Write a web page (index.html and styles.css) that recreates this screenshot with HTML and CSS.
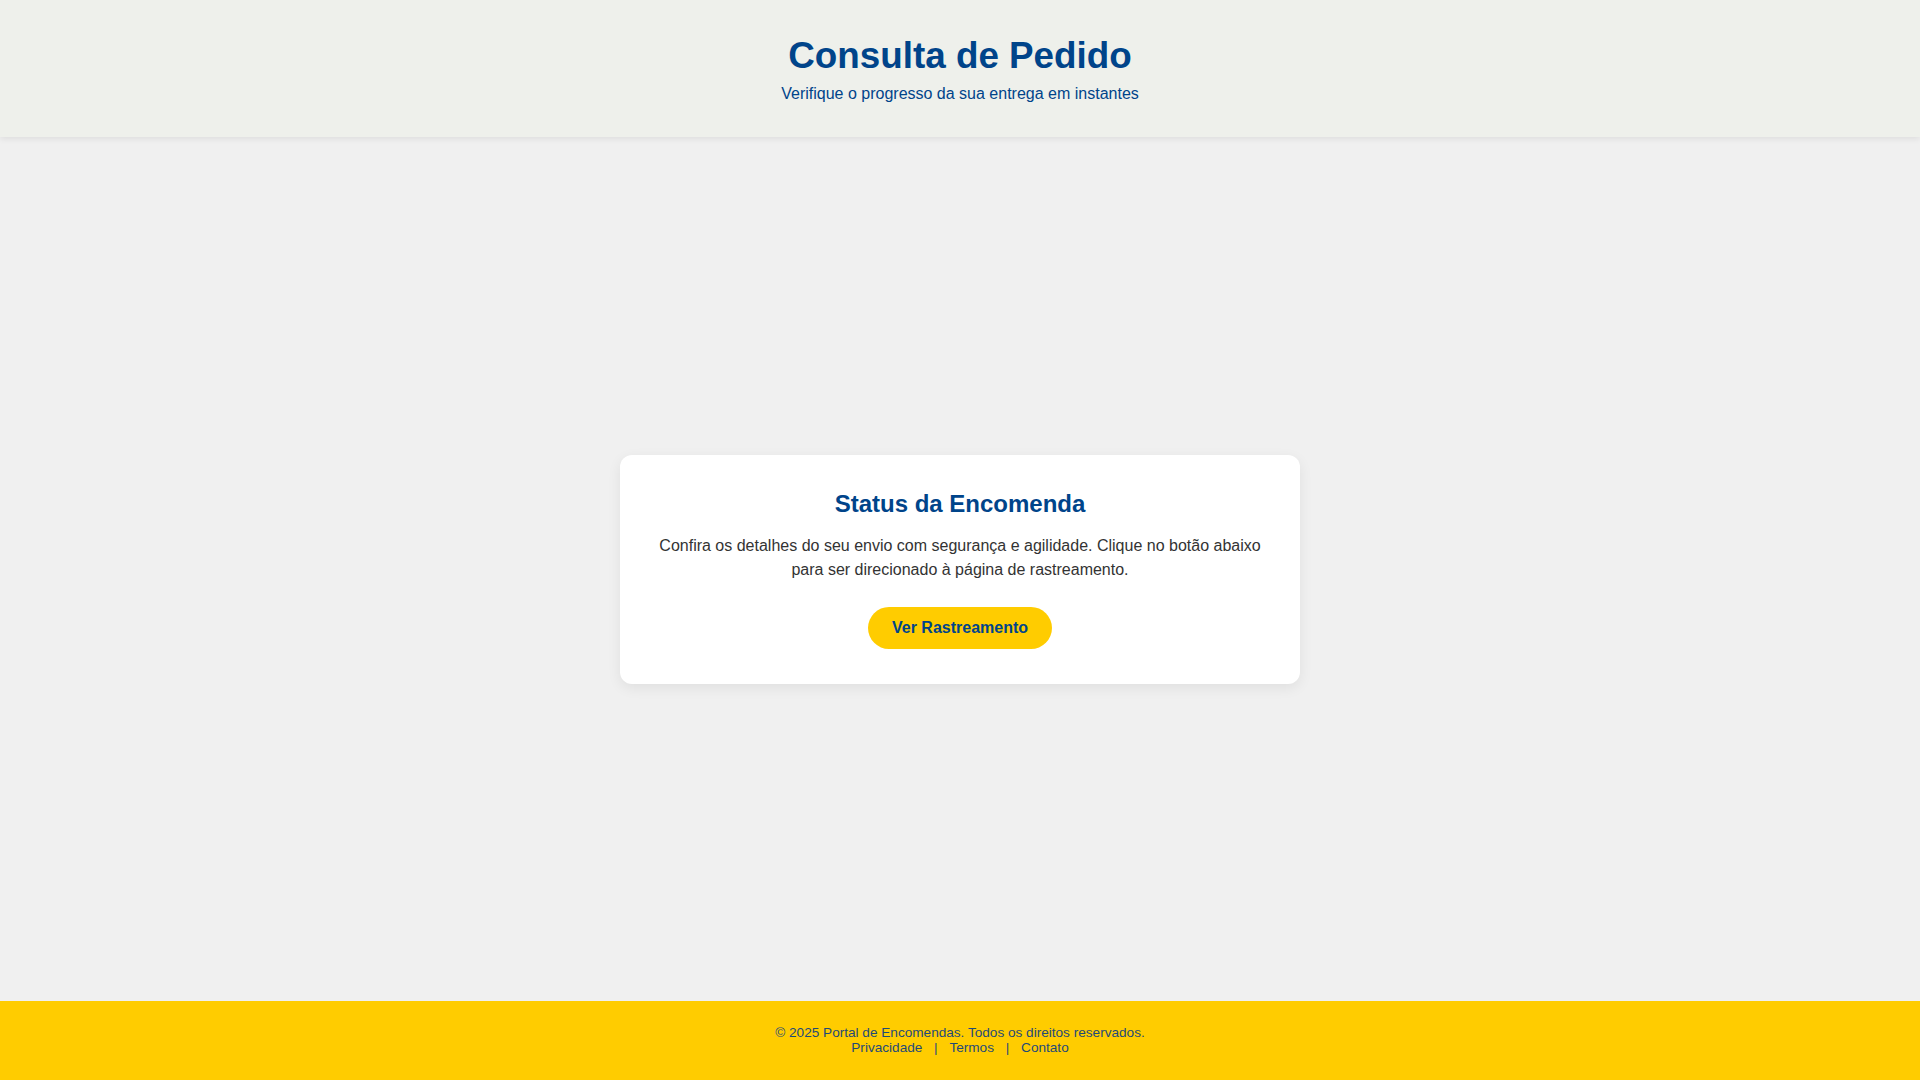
FILE: index.html
```html
<!DOCTYPE html>
<html lang="pt-BR">
<head>
<meta charset="utf-8">
<title>Consulta de Pedido</title>
<link rel="stylesheet" href="styles.css">
</head>
<body>
<header class="site-header">
  <h1 class="site-title">Consulta de Pedido</h1>
  <p class="site-subtitle">Verifique o progresso da sua entrega em instantes</p>
</header>
<main class="main">
  <section class="card">
    <h2 class="card-title">Status da Encomenda</h2>
    <p class="card-text">Confira os detalhes do seu envio com segurança e agilidade. Clique no botão abaixo para ser direcionado à página de rastreamento.</p>
    <a class="btn" href="#">Ver Rastreamento</a>
  </section>
</main>
<footer class="site-footer">
  <p class="footer-line">© 2025 Portal de Encomendas. Todos os direitos reservados.</p>
  <p class="footer-line"><a class="footer-link" href="#">Privacidade</a> | <a class="footer-link" href="#">Termos</a> | <a class="footer-link" href="#">Contato</a></p>
</footer>
</body>
</html>
```
FILE: styles.css
```css
* { box-sizing: border-box; }
html, body { margin: 0; padding: 0; }
body {
  font-family: "Liberation Sans", Arial, sans-serif;
  background: #f0f0f0;
  color: #333;
  min-height: 100vh;
  display: flex;
  flex-direction: column;
}
.site-header {
  background: #eef0eb;
  text-align: center;
  padding: 35px 20px 34px;
  box-shadow: 0 2px 6px rgba(0, 0, 0, 0.08);
  position: relative;
  z-index: 1;
}
.site-title {
  margin: 0 0 8px;
  font-size: 36.8px;
  font-weight: bold;
  color: #00448a;
}
.site-subtitle {
  margin: 0;
  font-size: 16px;
  color: #00448a;
}
.main {
  flex: 1;
  display: flex;
  align-items: center;
  justify-content: center;
  padding: 20px;
}
.card {
  width: 680px;
  background: #fff;
  border-radius: 12px;
  box-shadow: 0 4px 14px rgba(0, 0, 0, 0.07);
  padding: 35px 36px 35px;
  text-align: center;
}
.card-title {
  margin: 0 0 16px;
  font-size: 24px;
  font-weight: bold;
  color: #00448a;
}
.card-text {
  margin: 0 0 25px;
  font-size: 16px;
  line-height: 24px;
  color: #333;
}
.btn {
  display: inline-block;
  background: #ffcc00;
  color: #00448a;
  font-weight: bold;
  font-size: 16px;
  line-height: 18px;
  padding: 12px 24px;
  border-radius: 25px;
  text-decoration: none;
}
.site-footer {
  background: #ffcc00;
  text-align: center;
  padding: 24px 20px 25px;
  color: #1f4a78;
  font-size: 13.6px;
}
.footer-line { margin: 0; }
.footer-link {
  color: #1f4a78;
  text-decoration: none;
  margin: 0 8px;
}
```
